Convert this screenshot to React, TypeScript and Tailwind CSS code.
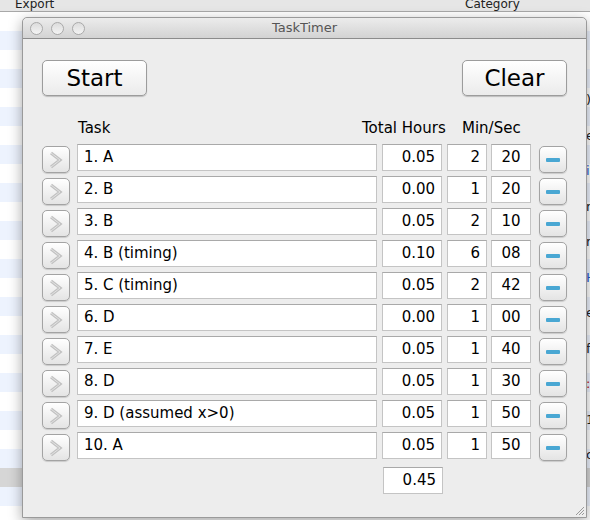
const rows = [
  { task: "1. A", hours: "0.05", min: "2", sec: "20" },
  { task: "2. B", hours: "0.00", min: "1", sec: "20" },
  { task: "3. B", hours: "0.05", min: "2", sec: "10" },
  { task: "4. B (timing)", hours: "0.10", min: "6", sec: "08" },
  { task: "5. C (timing)", hours: "0.05", min: "2", sec: "42" },
  { task: "6. D", hours: "0.00", min: "1", sec: "00" },
  { task: "7. E", hours: "0.05", min: "1", sec: "40" },
  { task: "8. D", hours: "0.05", min: "1", sec: "30" },
  { task: "9. D (assumed x>0)", hours: "0.05", min: "1", sec: "50" },
  { task: "10. A", hours: "0.05", min: "1", sec: "50" },
];

const font = { fontFamily: '"DejaVu Sans", Verdana, sans-serif' };

function Field({ value, className, right }: { value: string; className: string; right?: boolean }) {
  return (
    <div
      className={`h-[27px] bg-white border border-[#c4c4c4] border-t-[#a9a9a9] flex items-center text-[15px] text-black px-[6px] ${
        right ? "justify-end" : ""
      } ${className}`}
    >
      {value}
    </div>
  );
}

function SmallButton({ kind }: { kind: "go" | "minus" }) {
  return (
    <div className="w-[28px] h-[27px] mt-[2px] rounded-[5px] border border-[#a3a3a3] bg-gradient-to-b from-white to-[#e4e4e4] shadow-[0_1px_1px_rgba(0,0,0,0.15)] flex items-center justify-center">
      {kind === "go" ? (
        <svg width="16" height="18" viewBox="0 0 16 18">
          <polyline points="3,2 12,9 3,16" fill="none" stroke="#c2c2c2" strokeWidth="3.2" strokeLinejoin="miter" />
          <polyline points="3,2 12,9 3,16" fill="none" stroke="#e2e2e2" strokeWidth="1" strokeLinejoin="miter" />
        </svg>
      ) : (
        <div className="w-[14px] h-[4px] bg-[#49a7d3] rounded-[1px]" />
      )}
    </div>
  );
}

function BigButton({ label }: { label: string }) {
  return (
    <div className="w-[105px] h-[36px] rounded-[5px] border border-[#9c9c9c] bg-gradient-to-b from-white to-[#ebebeb] shadow-[0_1px_1px_rgba(0,0,0,0.2)] flex items-center justify-center text-[23px] text-black">
      {label}
    </div>
  );
}

export default function App() {
  return (
    <div className="relative w-[590px] h-[520px] overflow-hidden bg-white" style={font}>
      {/* background window */}
      <div className="absolute inset-0">
        <div className="h-[12px] bg-[#e6e6e6] border-b border-[#a8a8a8] relative text-[12px] text-[#222]">
          <span className="absolute left-[15px] -top-[5px]">Export</span>
          <span className="absolute left-[465px] -top-[5px]">Category</span>
        </div>
        <div className="flex flex-col">
          {Array.from({ length: 26 }).map((_, i) => (
            <div
              key={i}
              className={`h-[19px] ${i === 24 ? "bg-[#d6d6d6]" : i % 2 === 0 ? "bg-white" : "bg-[#edf3fe]"}`}
            />
          ))}
        </div>
        <div className="absolute left-[586px] top-[90px] flex flex-col gap-[16px] text-[13px] text-[#222]">
          <span>)</span>
          <span>e</span>
          <span className="text-[#2a5bd0]">i</span>
          <span>n</span>
          <span>r</span>
          <span className="text-[#2a5bd0]">H</span>
          <span>e</span>
          <span>f</span>
          <span className="text-[#c02020]">:</span>
          <span>1</span>
          <span>c</span>
        </div>
      </div>

      {/* TaskTimer window */}
      <div className="absolute left-[22px] top-[17px] w-[565px] h-[501px] bg-[#ededed] rounded-t-[5px] border border-[#9a9a9a] shadow-[0_4px_14px_rgba(0,0,0,0.35)] flex flex-col">
        <div className="h-[21px] rounded-t-[5px] bg-gradient-to-b from-[#ececec] to-[#d3d3d3] border-b border-[#8c8c8c] flex items-center px-[7px] relative shrink-0">
          <div className="flex gap-[8px]">
            {[0, 1, 2].map((i) => (
              <div
                key={i}
                className="w-[13px] h-[13px] rounded-full border border-[#a9a9a9] bg-gradient-to-b from-[#dcdcdc] to-[#f4f4f4]"
              />
            ))}
          </div>
          <div className="absolute inset-0 flex items-center justify-center text-[13px] text-[#555]">TaskTimer</div>
        </div>

        <div className="flex-1 px-[19px] pt-[21px] flex flex-col">
          <div className="flex justify-between">
            <BigButton label="Start" />
            <BigButton label="Clear" />
          </div>

          <div className="flex items-end mt-[21px] h-[22px] text-[15px] text-black">
            <span className="ml-[36px] w-[284px]">Task</span>
            <span className="w-[100px]">Total Hours</span>
            <span>Min/Sec</span>
          </div>

          <div className="flex flex-col gap-[3px] mt-[5px]">
            {rows.map((r) => (
              <div key={r.task} className="flex items-start">
                <SmallButton kind="go" />
                <Field value={r.task} className="w-[301px] ml-[7px]" />
                <Field value={r.hours} right className="w-[60px] ml-[5px]" />
                <Field value={r.min} right className="w-[40px] ml-[5px]" />
                <Field value={r.sec} className="w-[40px] ml-[4px] justify-center" />
                <div className="ml-[8px]">
                  <SmallButton kind="minus" />
                </div>
              </div>
            ))}
          </div>

          <div className="flex mt-[6px]">
            <Field value="0.45" right className="w-[60px] ml-[341px]" />
          </div>
        </div>

        <svg className="absolute right-[1px] bottom-[1px]" width="12" height="12" viewBox="0 0 12 12">
          <line x1="11" y1="3" x2="3" y2="11" stroke="#9a9a9a" />
          <line x1="11" y1="6" x2="6" y2="11" stroke="#9a9a9a" />
          <line x1="11" y1="9" x2="9" y2="11" stroke="#9a9a9a" />
        </svg>
      </div>
    </div>
  );
}
